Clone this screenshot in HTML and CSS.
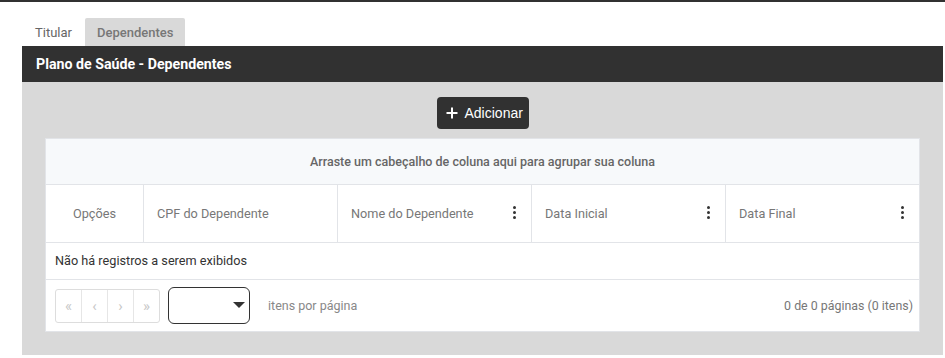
FILE: index.html
```html
<!DOCTYPE html>
<html lang="pt-BR">
<head>
  <meta charset="UTF-8" />
  <meta name="viewport" content="width=device-width, initial-scale=1.0"/>
  <title>Plano de Saúde - Dependentes</title>
  <link rel="stylesheet" href="styles.css">
</head>
<body>

  <div class="page">
    <div class="tabs">
      <span class="tab">Titular</span>
      <span class="tab active">Dependentes</span>
    </div>

    <div class="panel-title">Plano de Saúde - Dependentes</div>

    <div class="panel">
      <div class="toolbar">
        <button class="add-btn" type="button">
          <svg width="12" height="12" viewBox="0 0 12 12"><path d="M6 0.5v11M0.5 6h11" stroke="#fff" stroke-width="2"/></svg>
          Adicionar
        </button>
      </div>

      <div class="grid">
        <div class="group-panel">Arraste um cabeçalho de coluna aqui para agrupar sua coluna</div>

        <div class="grid-head">
          <div class="col col-opts">Opções</div>
          <div class="col">CPF do Dependente</div>
          <div class="col">Nome do Dependente <span class="kebab"><i></i><i></i><i></i></span></div>
          <div class="col">Data Inicial <span class="kebab"><i></i><i></i><i></i></span></div>
          <div class="col">Data Final <span class="kebab"><i></i><i></i><i></i></span></div>
        </div>

        <div class="no-data">Não há registros a serem exibidos</div>

        <div class="pager">
          <div class="pager-nav">
            <span class="pg">&laquo;</span>
            <span class="pg">&lsaquo;</span>
            <span class="pg">&rsaquo;</span>
            <span class="pg">&raquo;</span>
          </div>
          <div class="page-size"><span class="caret"></span></div>
          <span class="pager-label">itens por página</span>
          <span class="pager-info">0 de 0 páginas (0 itens)</span>
        </div>
      </div>
    </div>
  </div>

</body>
</html>
```

FILE: styles.css
```css
:root {
  --dark: #313131;
  --panel: #d9d9d9;
  --line: #e2e4e8;
}

body {
  margin: 0;
  font-family: Roboto, "Liberation Sans", sans-serif;
  background-color: #fff;
  border-top: 2px solid var(--dark);
}

.page {
  padding: 16px 2px 0 22px;
}

.tabs {
  display: flex;
  height: 28px;
}

.tab {
  display: flex;
  align-items: center;
  padding: 0 13px;
  font-size: 13px;
  color: #666;
}

.tab.active {
  background-color: var(--panel);
  color: #777;
  font-weight: 500;
  padding: 0 12px;
  border-radius: 2px 2px 0 0;
}

.panel-title {
  background-color: var(--dark);
  color: #fff;
  font-size: 14.2px;
  font-weight: 700;
  height: 36px;
  line-height: 36px;
  padding-left: 14px;
}

.panel {
  background-color: var(--panel);
  padding: 15px 23px 23px;
}

.toolbar {
  display: flex;
  justify-content: center;
  margin-bottom: 9px;
}

.add-btn {
  display: flex;
  align-items: center;
  gap: 7px;
  height: 32px;
  width: 92px;
  padding: 0 0 0 9px;
  background-color: var(--dark);
  color: #fff;
  border: none;
  border-radius: 4px;
  font-family: "Liberation Sans", Arial, sans-serif;
  font-size: 14px;
}

.grid {
  background-color: #fff;
  border: 1px solid var(--line);
}

.group-panel {
  height: 45px;
  line-height: 45px;
  text-align: center;
  background-color: #f7f9fb;
  border-bottom: 1px solid var(--line);
  font-size: 12.5px;
  font-weight: 500;
  color: #666;
}

.grid-head {
  display: grid;
  grid-template-columns: 98px 194px 194px 194px 194px;
  height: 57px;
  border-bottom: 1px solid var(--line);
}

.col {
  display: flex;
  align-items: center;
  padding: 0 13px;
  font-size: 12.7px;
  color: #777;
  border-right: 1px solid var(--line);
  position: relative;
}

.col-opts {
  justify-content: center;
}

.kebab {
  position: absolute;
  right: 15px;
  top: 21px;
  display: flex;
  flex-direction: column;
  gap: 2px;
}

.kebab i {
  width: 3px;
  height: 3px;
  border-radius: 50%;
  background-color: #333;
}

.no-data {
  height: 36px;
  line-height: 36px;
  padding-left: 9px;
  font-size: 12.7px;
  color: #333;
  border-bottom: 1px solid var(--line);
}

.pager {
  display: flex;
  align-items: center;
  height: 51px;
  padding: 0 6px 0 9px;
}

.pager-nav {
  display: flex;
  height: 32px;
  border: 1px solid #ddd;
  border-radius: 3px;
}

.pg {
  width: 25px;
  display: flex;
  align-items: center;
  justify-content: center;
  color: #c8c8c8;
  font-size: 15px;
  border-right: 1px solid #e6e6e6;
}

.pg:last-child {
  border-right: none;
}

.page-size {
  position: relative;
  width: 80px;
  height: 35px;
  margin-left: 8px;
  border: 1px solid #333;
  border-radius: 6px;
}

.caret {
  position: absolute;
  right: 4px;
  top: 14px;
  border-left: 6px solid transparent;
  border-right: 6px solid transparent;
  border-top: 6px solid #333;
}

.pager-label {
  margin-left: 18px;
  font-size: 12.5px;
  color: #888;
}

.pager-info {
  margin-left: auto;
  font-size: 12.4px;
  color: #777;
}
```
